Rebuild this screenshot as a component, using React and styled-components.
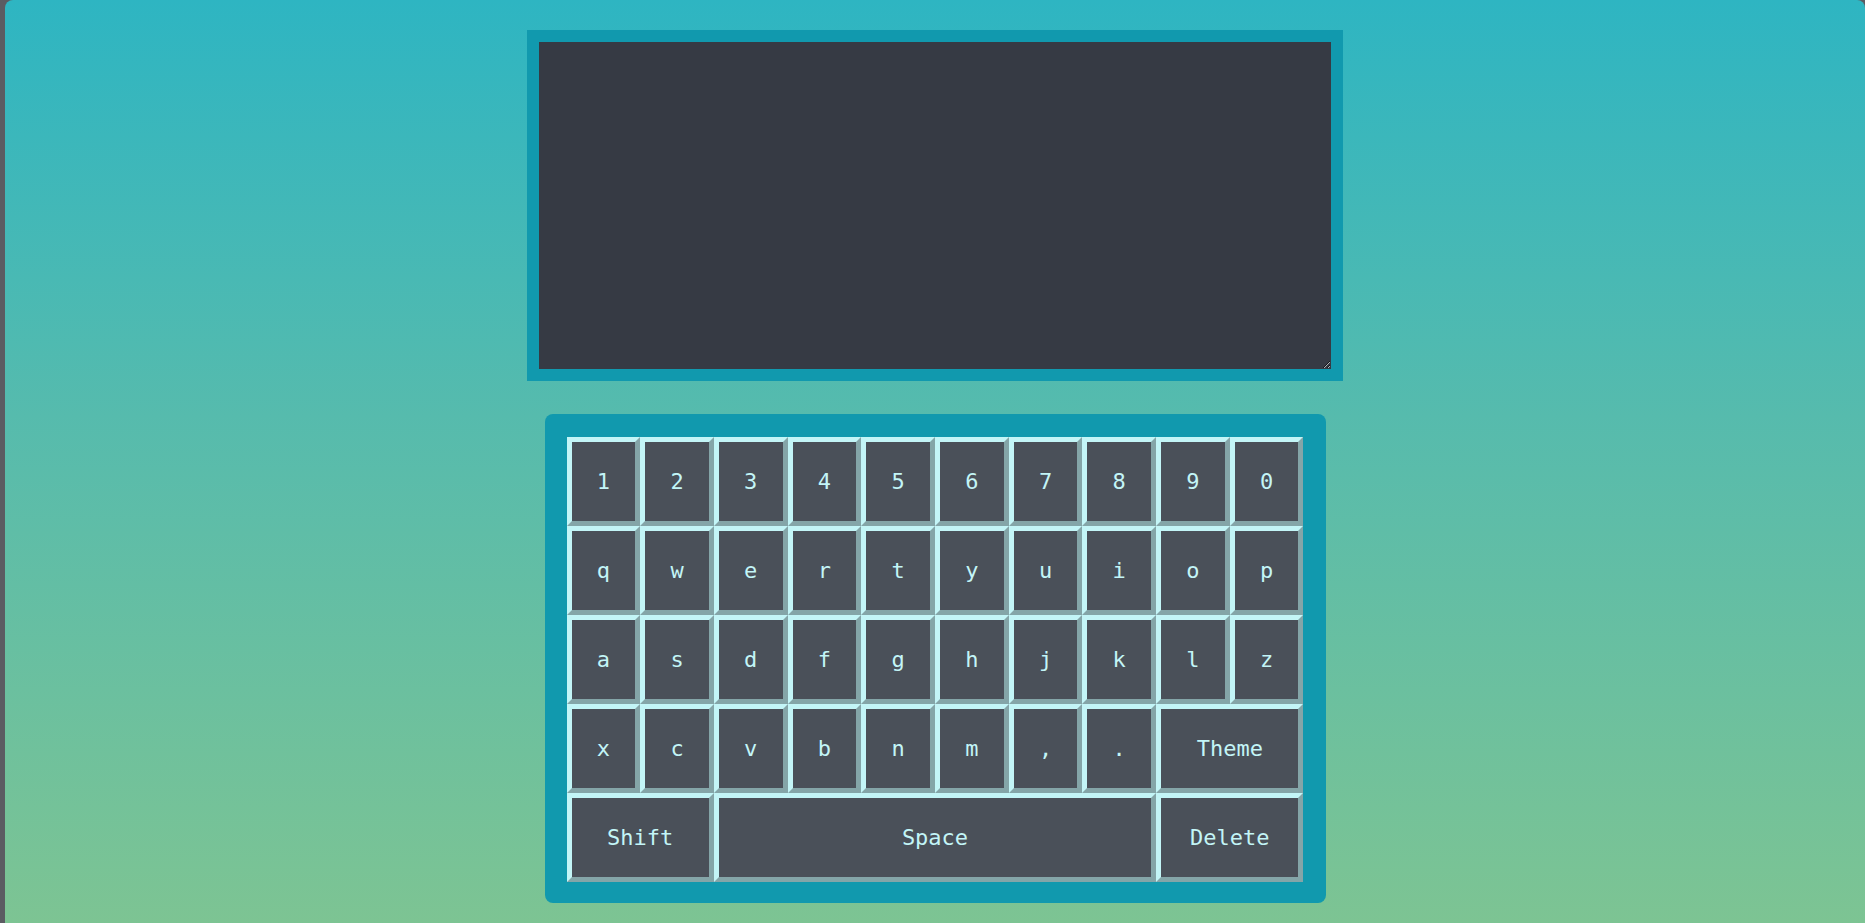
import React from "react";
import styled, { createGlobalStyle } from "styled-components";

const GlobalStyle = createGlobalStyle`
  html, body {
    margin: 0;
    padding: 0;
    background: #5b5c62;
    overflow: hidden;
  }
`;

const rows = [
  ["1", "2", "3", "4", "5", "6", "7", "8", "9", "0"],
  ["q", "w", "e", "r", "t", "y", "u", "i", "o", "p"],
  ["a", "s", "d", "f", "g", "h", "j", "k", "l", "z"],
  ["x", "c", "v", "b", "n", "m", ",", ".", ["Theme", 2]],
  [["Shift", 2], ["Space", 6], ["Delete", 2]],
];

const App = () => {
  return (
    <>
      <GlobalStyle />
      <Page>
        <Screen spellCheck={false} />
        <Keyboard>
          {rows.flat().map((k, i) => {
            const label = Array.isArray(k) ? k[0] : k;
            const span = Array.isArray(k) ? k[1] : 1;
            return (
              <Key key={i} span={span}>
                {label}
              </Key>
            );
          })}
        </Keyboard>
      </Page>
    </>
  );
};

export default App;

const Page = styled.div`
  margin-left: 5px;
  height: 923px;
  box-sizing: border-box;
  padding-top: 30px;
  border-radius: 8px 8px 0 0;
  background: linear-gradient(to bottom, #2eb5c2 0%, #56bbad 45%, #7dc493 100%);
  display: flex;
  flex-direction: column;
  align-items: center;
  gap: 33px;
`;

const Screen = styled.textarea`
  display: block;
  box-sizing: border-box;
  width: 816px;
  height: 351px;
  margin: 0;
  padding: 8px;
  border: 12px solid #1199ae;
  background: #363a44;
  color: #c3f5f7;
  font-family: "DejaVu Sans Mono", monospace;
  font-size: 20px;
  outline: none;
`;

const Keyboard = styled.div`
  box-sizing: border-box;
  width: 781px;
  padding: 23px 22px 21px 22px;
  background: #1199ae;
  border-radius: 8px;
  display: grid;
  grid-template-columns: repeat(10, 1fr);
  grid-auto-rows: 89px;
`;

const Key = styled.button`
  grid-column: span ${({ span }) => span};
  box-sizing: border-box;
  margin: 0;
  padding: 0;
  border-style: solid;
  border-width: 5px;
  border-color: #c3f5f7 #84a5a8 #84a5a8 #c3f5f7;
  background: #4a5059;
  color: #c3f5f7;
  font-family: "DejaVu Sans Mono", "Liberation Mono", monospace;
  font-size: 22px;
  cursor: pointer;
`;
